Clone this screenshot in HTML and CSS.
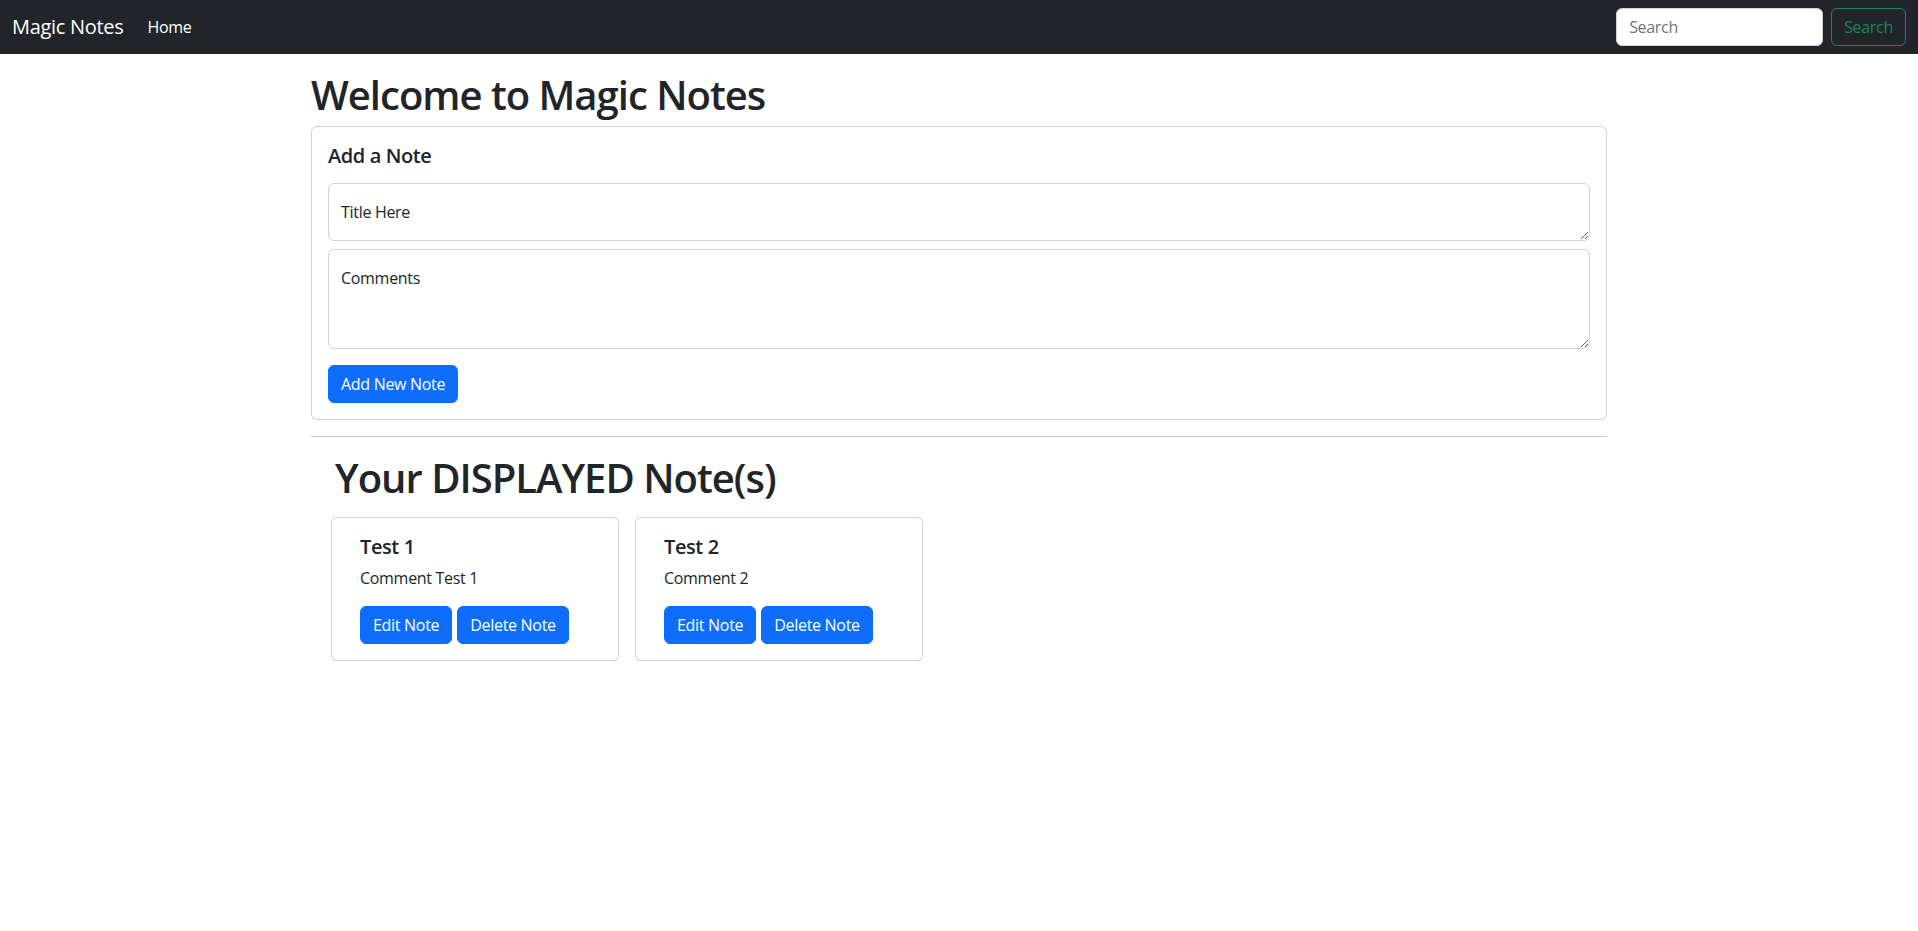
FILE: index.html
```html
<!DOCTYPE html>
<html lang="en">
<head>
<meta charset="utf-8">
<title>Magic Notes</title>
<link rel="stylesheet" href="styles.css">
</head>
<body>
<nav class="navbar">
  <div class="nav-inner">
    <div class="nav-left">
      <a class="brand" href="#">Magic Notes</a>
      <a class="nav-link" href="#">Home</a>
    </div>
    <form class="search-form">
      <input class="search-input" type="search" placeholder="Search">
      <button class="btn btn-outline-success" type="button">Search</button>
    </form>
  </div>
</nav>
<main class="container">
  <h1 class="page-title">Welcome to Magic Notes</h1>
  <div class="card">
    <div class="card-body">
      <h5 class="card-title add-title">Add a Note</h5>
      <textarea class="field field-title" placeholder="Title Here"></textarea>
      <textarea class="field field-comments" placeholder="Comments"></textarea>
      <button class="btn btn-primary" type="button">Add New Note</button>
    </div>
  </div>
  <hr class="divider">
  <section class="notes">
    <h1 class="notes-title">Your DISPLAYED Note(s)</h1>
    <div class="notes-list">
      <div class="card note-card">
        <div class="card-body note-body">
          <h5 class="card-title">Test 1</h5>
          <p class="card-text">Comment Test 1</p>
          <div class="note-actions">
            <button class="btn btn-primary" type="button">Edit Note</button>
            <button class="btn btn-primary" type="button">Delete Note</button>
          </div>
        </div>
      </div>
      <div class="card note-card">
        <div class="card-body note-body">
          <h5 class="card-title">Test 2</h5>
          <p class="card-text">Comment 2</p>
          <div class="note-actions">
            <button class="btn btn-primary" type="button">Edit Note</button>
            <button class="btn btn-primary" type="button">Delete Note</button>
          </div>
        </div>
      </div>
    </div>
  </section>
</main>
</body>
</html>
```
FILE: styles.css
```css
* { box-sizing: border-box; }

body {
  margin: 0;
  font-family: "Open Sans", "Noto Sans", sans-serif;
  font-size: 16px;
  line-height: 1.5;
  letter-spacing: -0.3px;
  color: #212529;
  background: #fff;
}

.navbar {
  background: #212529;
  padding: 8px 0;
}

.nav-inner {
  display: flex;
  align-items: center;
  justify-content: space-between;
  padding: 0 12px;
  height: 38px;
}

.nav-left {
  display: flex;
  align-items: center;
}

.brand {
  color: #fff;
  text-decoration: none;
  font-size: 20px;
  line-height: 30px;
  margin-right: 16px;
}

.nav-link {
  color: #fff;
  text-decoration: none;
  padding: 8px;
  line-height: 24px;
}

.search-form {
  display: flex;
  align-items: center;
  gap: 8px;
}

.search-input {
  width: 207px;
  height: 38px;
  padding: 6px 12px;
  font: inherit;
  letter-spacing: inherit;
  color: #212529;
  background: #fff;
  border: 1px solid #ced4da;
  border-radius: 6px;
  outline: none;
}

.search-input::placeholder { color: #6c757d; }

.btn {
  display: inline-block;
  font: inherit;
  font-size: 16px;
  line-height: 24px;
  letter-spacing: inherit;
  padding: 6px 12px;
  border: 1px solid transparent;
  border-radius: 6px;
  cursor: pointer;
}

.btn-outline-success {
  color: #198754;
  background: transparent;
  border-color: #198754;
}

.btn-primary {
  color: #fff;
  background: #0d6efd;
  border-color: #0d6efd;
}

.container {
  max-width: 1320px;
  margin: 0 auto;
  padding: 0 12px;
}

.page-title,
.notes-title {
  font-size: 40px;
  font-weight: 600;
  line-height: 1.2;
  letter-spacing: -1px;
  padding-top: 1px;
  margin: 16px 0 7px;
}

.card {
  border: 1px solid rgba(0, 0, 0, 0.175);
  border-radius: 6px;
  background: #fff;
}

.card-body {
  padding: 16px;
}

.card-title {
  font-size: 20px;
  font-weight: 600;
  line-height: 1.2;
  letter-spacing: -0.4px;
  padding-top: 1px;
  margin: 0 0 7px;
}

.add-title {
  margin-bottom: 15px;
}

.field {
  display: block;
  width: 100%;
  padding: 16px 12px;
  font: inherit;
  letter-spacing: inherit;
  color: #212529;
  border: 1px solid #ced4da;
  border-radius: 6px;
  resize: vertical;
  outline: none;
}

.field::placeholder {
  color: #212529;
  opacity: 1;
}

.field-title {
  height: 58px;
  margin-bottom: 8px;
}

.field-comments {
  height: 100px;
  margin-bottom: 16px;
}

.divider {
  margin: 16px 0;
  border: 0;
  border-top: 1px solid #212529;
  opacity: 0.25;
}

.notes {
  padding: 0 12px;
}

.notes-title {
  margin: 0 0 7px 12px;
}

.notes-list {
  display: flex;
  flex-wrap: wrap;
}

.note-card {
  width: 288px;
  margin: 8px;
}

.note-body {
  padding: 16px 28px;
}

.card-text {
  margin: 0 0 16px;
}

.note-actions {
  display: flex;
  gap: 5px;
}
```
